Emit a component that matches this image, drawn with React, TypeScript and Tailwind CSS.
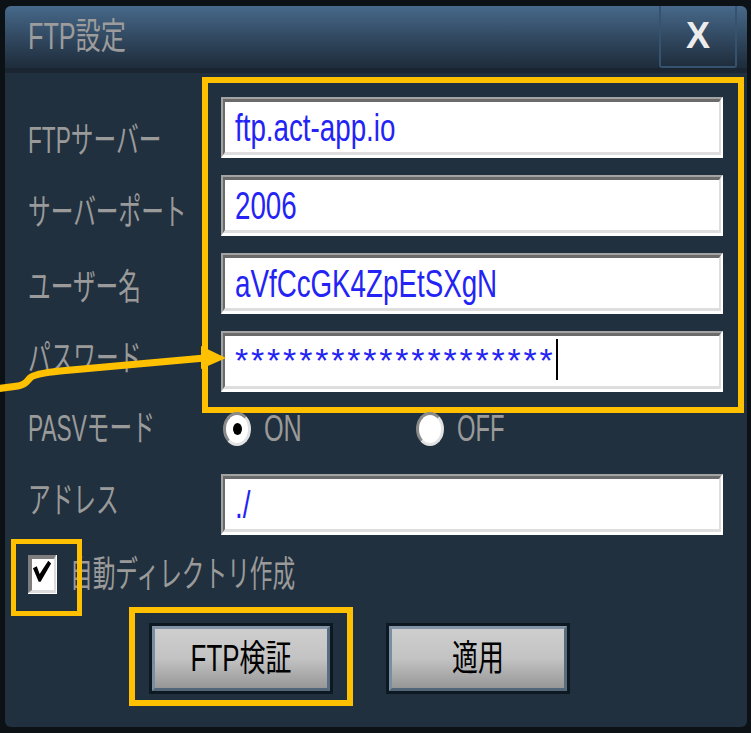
import type { ReactNode } from "react";

// pixel-font look: the original is a horizontally squeezed bitmap font
const label = "inline-block origin-left scale-x-[0.63] whitespace-nowrap text-[36px] leading-none text-[#9a9a9a]";
const inputText = "mt-[7px] inline-block origin-left scale-x-[0.73] whitespace-nowrap text-[38px] leading-none text-[#2323f5]";

function Sunken({ children, className = "" }: { children?: ReactNode; className?: string }) {
  return (
    <div className={`h-[61px] border-t-2 border-l-2 border-r-2 border-b-[3px] border-t-[#a3a3a3] border-l-[#a3a3a3] border-r-white border-b-white ${className}`}>
      <div className="flex h-full items-start border-t-[3px] border-l-2 border-r-2 border-b-[3px] border-t-[#6b6b6b] border-l-[#6b6b6b] border-r-[#dedede] border-b-[#dedede] bg-white pl-[10px]">
        {children}
      </div>
    </div>
  );
}

function Radio({ on }: { on?: boolean }) {
  return (
    <div className="flex h-[34px] w-[28px] shrink-0 items-center justify-center rounded-[50%] border-[3px] border-t-[#8a8a8a] border-l-[#8a8a8a] border-r-[#e2e2e2] border-b-[#e2e2e2] bg-white">
      {on && <div className="h-[12px] w-[9px] rounded-[50%] bg-black" />}
    </div>
  );
}

function PanelButton({ children }: { children: ReactNode }) {
  return (
    <div className="h-[71px] w-[184px] border-[3px] border-[#0c1822]">
      <div className="flex h-full items-center justify-center border-[3px] border-t-[#8294a6] border-l-[#7a8ea1] border-r-[#586c7f] border-b-[#536679] bg-linear-to-b from-[#cecece] via-[#c3c3c3] to-[#979797]">
        <span className="inline-block origin-center scale-x-[0.72] whitespace-nowrap text-[36px] leading-none text-black">{children}</span>
      </div>
    </div>
  );
}

export default function App() {
  return (
    <div className="relative h-[733px] w-[751px] overflow-hidden bg-[#0c1116] pt-[6px] pl-[5px] pr-[4px] pb-[6px] font-[family-name:'Liberation_Sans','Noto_Sans_CJK_JP',sans-serif]">
      <div className="flex h-full flex-col overflow-hidden rounded-[6px] bg-[#21303e]">
        {/* title bar */}
        <div className="flex h-[62px] shrink-0 items-stretch justify-between bg-linear-to-b from-[#47698b] to-[#1e2c3b]">
          <div className="flex items-center pl-[23px]">
            <span className="inline-block origin-left scale-x-[0.7] whitespace-nowrap text-[36px] leading-none text-[#9c9c9c]">FTP設定</span>
          </div>
          <div className="mr-[10px] flex w-[78px] items-center justify-center rounded-b-[3px] border-x-2 border-b-2 border-[#35536f]">
            <span className="text-[36px] font-bold leading-none text-[#ececec]">X</span>
          </div>
        </div>
        <div className="h-[5px] shrink-0 bg-[#1a2531]" />

        {/* server fields, highlighted */}
        <div className="mt-[4px] flex">
          <div className="flex w-[197px] shrink-0 flex-col pl-[23px]">
            <span className={`mt-[46px] ${label}`}>FTPサーバー</span>
            <span className={`mt-[36px] ${label}`}>サーバーポート</span>
            <span className={`mt-[39px] ${label}`}>ユーザー名</span>
            <span className={`mt-[35px] ${label}`}>パスワード</span>
          </div>
          <div className="mr-[3px] flex flex-1 flex-col gap-[17px] border-[6px] border-[#ffc000] pt-[14px] pr-[15px] pb-[15px] pl-[13px]">
            <Sunken>
              <span className={inputText}>ftp.act-app.io</span>
            </Sunken>
            <Sunken>
              <span className={inputText}>2006</span>
            </Sunken>
            <Sunken>
              <span className={inputText}>aVfCcGK4ZpEtSXgN</span>
            </Sunken>
            <Sunken>
              <span className="mt-[7px] inline-block whitespace-nowrap text-[34px] leading-none tracking-[2.8px] text-[#2323f5]">********************</span>
              <div className="mt-[3px] h-[41px] w-[2px] bg-black" />
            </Sunken>
          </div>
        </div>

        {/* PASV */}
        <div className="-mt-[3px] flex h-[38px] items-center">
          <div className="w-[197px] shrink-0 pl-[23px]">
            <span className={label}>PASVモード</span>
          </div>
          <div className="flex items-center pl-[21px]">
            <div className="flex w-[193px] items-center gap-[13px]">
              <Radio on />
              <span className="inline-block origin-left scale-x-[0.7] text-[36px] leading-none text-[#9a9a9a]">ON</span>
            </div>
            <div className="flex items-center gap-[13px]">
              <Radio />
              <span className="inline-block origin-left scale-x-[0.66] text-[36px] leading-none text-[#9a9a9a]">OFF</span>
            </div>
          </div>
        </div>

        {/* address */}
        <div className="mt-[26px] flex items-center">
          <div className="w-[197px] shrink-0 pl-[23px]">
            <span className={`mb-[8px] ${label}`}>アドレス</span>
          </div>
          <div className="flex-1 pr-[24px] pl-[19px]">
            <Sunken>
              <span className={inputText}>./</span>
            </Sunken>
          </div>
        </div>

        {/* auto directory */}
        <div className="relative mt-[4px] flex h-[71px] items-center pl-[23px]">
          <div className="h-[39px] w-[29px] shrink-0 border-b border-r border-white">
            <div className="h-full border-t-4 border-l-4 border-r-2 border-b-[3px] border-t-[#7e7e7e] border-l-[#7e7e7e] border-r-[#dcdcdc] border-b-[#dcdcdc] bg-white">
              <svg viewBox="0 0 23 31" className="h-full w-full">
                <polygon points="1,9 5,7 8,15 17,1 20,4 9,23 7,23" fill="#000" />
              </svg>
            </div>
          </div>
          <span className={`ml-[13px] ${label}`}>自動ディレクトリ作成</span>
          <div className="absolute top-0 left-[6px] h-[77px] w-[71px] border-[5px] border-[#ffc000]" />
        </div>

        {/* buttons */}
        <div className="mt-[13px] flex gap-[53px] pl-[144px]">
          <div className="relative">
            <PanelButton>FTP検証</PanelButton>
            <div className="absolute -top-[16px] -left-[20px] h-[99px] w-[224px] border-[6px] border-[#ffc000]" />
          </div>
          <PanelButton>適用</PanelButton>
        </div>
      </div>

      {/* annotation arrow */}
      <svg className="pointer-events-none absolute inset-0" width="751" height="733" viewBox="0 0 751 733">
        <path d="M -5 389 L 18 386 C 26 385 27 381 30 378 C 33 375 40 373 60 371 L 205 358" fill="none" stroke="#ffc000" strokeWidth="7" strokeLinejoin="round" />
        <polygon points="201,346 226,358 201,369" fill="#ffc000" />
      </svg>
    </div>
  );
}
